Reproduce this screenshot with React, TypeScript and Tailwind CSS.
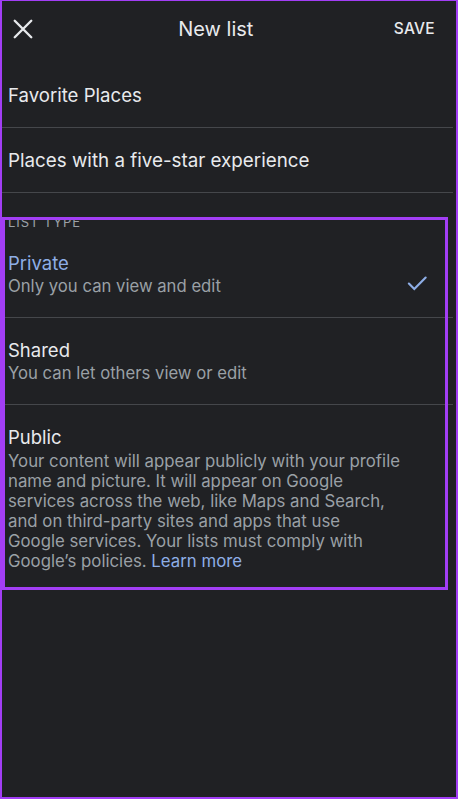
import React from "react";

const font = { fontFamily: "Inter, Roboto, 'Noto Sans', sans-serif" };

function Divider() {
  return <div className="h-px bg-[#45474b] mr-[3px]" />;
}

function Option({
  title,
  sub,
  active,
  children,
}: {
  title: string;
  sub?: string;
  active?: boolean;
  children?: React.ReactNode;
}) {
  return (
    <div className="flex items-start pl-[6px] pr-[26px] pt-[20px] pb-[20px]">
      <div className="flex-1">
        <div
          className={`text-[18.5px] leading-[24px] ${
            active ? "text-[#8eaee6]" : "text-[#e8eaed]"
          }`}
        >
          {title}
        </div>
        {sub && (
          <div className="text-[16.7px] leading-[22px] text-[#9aa0a6]">{sub}</div>
        )}
        {children}
      </div>
      {active && (
        <svg width="26" height="26" viewBox="0 0 24 24" className="mt-[19px]">
          <path
            d="M4.5 12.5l5 5L20 7"
            fill="none"
            stroke="#8eaee6"
            strokeWidth="2"
            strokeLinecap="round"
          />
        </svg>
      )}
    </div>
  );
}

export default function App() {
  return (
    <div
      className="relative w-[458px] h-[799px] bg-[#202124] border-l-2 border-r-2 border-t border-b-2 border-[#a23ef5] overflow-hidden"
      style={font}
    >
      <div className="h-[62px] flex items-center pl-[10px] pr-[21px]">
        <svg width="22" height="22" viewBox="0 0 24 24" className="mb-[6px]">
          <path
            d="M3 3L21 21M21 3L3 21"
            stroke="#e8eaed"
            strokeWidth="2.6"
            strokeLinecap="round"
          />
        </svg>
        <div className="flex-1 text-center text-[20px] leading-[28px] text-[#e8eaed] mb-[6px] pl-[4px]">
          New list
        </div>
        <div className="text-[15.5px] font-medium tracking-[0.3px] text-[#e8eaed] mb-[6px]">
          SAVE
        </div>
      </div>

      <div className="h-[64px] flex items-center pl-[6px] pt-[2px] text-[18.6px] text-[#e8eaed]">
        Favorite Places
      </div>
      <Divider />
      <div className="h-[64px] flex items-center pl-[6px] pt-[2px] text-[18.8px] text-[#e8eaed]">
        Places with a five-star experience
      </div>
      <Divider />

      <div className="h-[38px] pl-[6px] pt-[23px] text-[13px] leading-[13px] tracking-[0.9px] text-[#9aa0a6]">
        LIST TYPE
      </div>

      <Option title="Private" sub="Only you can view and edit" active />
      <Divider />
      <Option title="Shared" sub="You can let others view or edit" />
      <Divider />
      <Option title="Public">
        <div className="mt-[2px] whitespace-nowrap text-[16.8px] leading-[20px] text-[#9aa0a6]">
          <div>Your content will appear publicly with your profile</div>
          <div>name and picture. It will appear on Google</div>
          <div>services across the web, like Maps and Search,</div>
          <div>and on third-party sites and apps that use</div>
          <div>Google services. Your lists must comply with</div>
          <div>
            Google’s policies. <span className="text-[#8eaee6]">Learn more</span>
          </div>
        </div>
      </Option>

      <div className="absolute left-0 top-[216px] w-[446px] h-[373px] border-[3px] border-[#a23ef5] pointer-events-none" />
    </div>
  );
}
